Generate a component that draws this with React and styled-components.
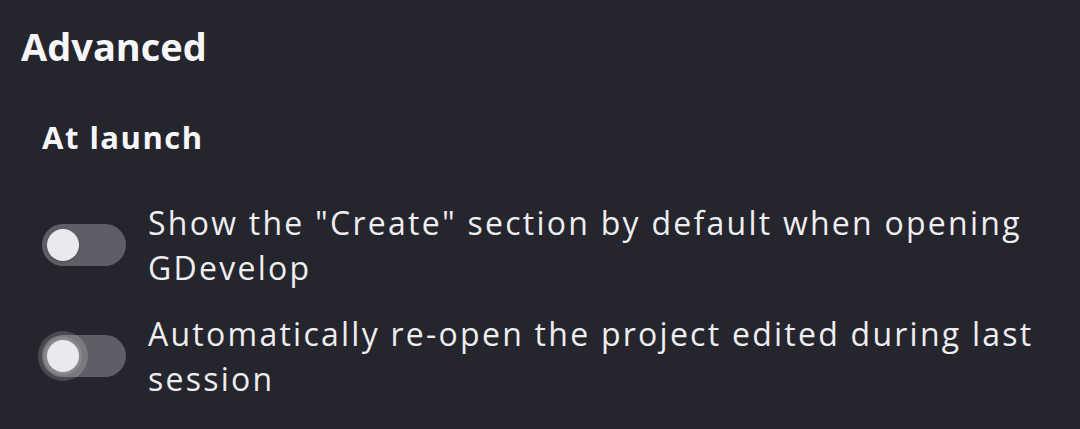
import React from 'react'
import styled, { createGlobalStyle } from 'styled-components'

const GlobalStyle = createGlobalStyle`
    html, body {
        margin: 0;
        padding: 0;
        background: #25252d;
    }
    * {
        box-sizing: border-box;
    }
`

const Page = styled.div`
    width: 1080px;
    height: 429px;
    padding: 24px 20px 0 21px;
    background: #25252d;
    font-family: "Open Sans", "Noto Sans", sans-serif;
    color: #f2f2f4;
    display: flex;
    flex-direction: column;
    overflow: hidden;
`

const Title = styled.h1`
    margin: 0;
    font-size: 38px;
    line-height: 1.2;
    font-weight: 700;
    color: #f7f7f9;
`

const SectionTitle = styled.h2`
    margin: 49px 0 0 21px;
    font-size: 31px;
    line-height: 1.2;
    font-weight: 700;
    letter-spacing: 1.5px;
    color: #f7f7f9;
`

const Options = styled.div`
    margin: 44px 0 0 21px;
    display: flex;
    flex-direction: column;
    gap: 21px;
`

const Row = styled.label`
    display: flex;
    align-items: center;
    gap: 22px;
`

const Track = styled.span`
    position: relative;
    flex-shrink: 0;
    width: 84px;
    height: 42px;
    border-radius: 21px;
    background: #5e5e66;
`

const Thumb = styled.span`
    position: absolute;
    top: 5px;
    left: 5px;
    width: 32px;
    height: 32px;
    border-radius: 50%;
    background: #eaeaee;
    box-shadow: ${p => p.$focused
        ? '0 0 0 3px rgba(255,255,255,0.12), 0 0 0 9px rgba(255,255,255,0.17)'
        : '0 1px 2px rgba(0,0,0,0.25)'};
`

const Label = styled.span`
    flex: 1;
    font-size: 32px;
    line-height: 45px;
    letter-spacing: 2.25px;
    color: #eeeef0;
`

function Toggle({ focused }) {
    return (
        <Track>
            <Thumb $focused={focused} />
        </Track>
    )
}

export default function App() {
    return (
        <>
            <GlobalStyle />
            <Page>
                <Title>{'Advanced'}</Title>
                <SectionTitle>{'At launch'}</SectionTitle>
                <Options>
                    <Row>
                        <Toggle />
                        <Label>{'Show the "Create" section by default when opening GDevelop'}</Label>
                    </Row>
                    <Row>
                        <Toggle focused />
                        <Label>{'Automatically re-open the project edited during last session'}</Label>
                    </Row>
                </Options>
            </Page>
        </>
    )
}
